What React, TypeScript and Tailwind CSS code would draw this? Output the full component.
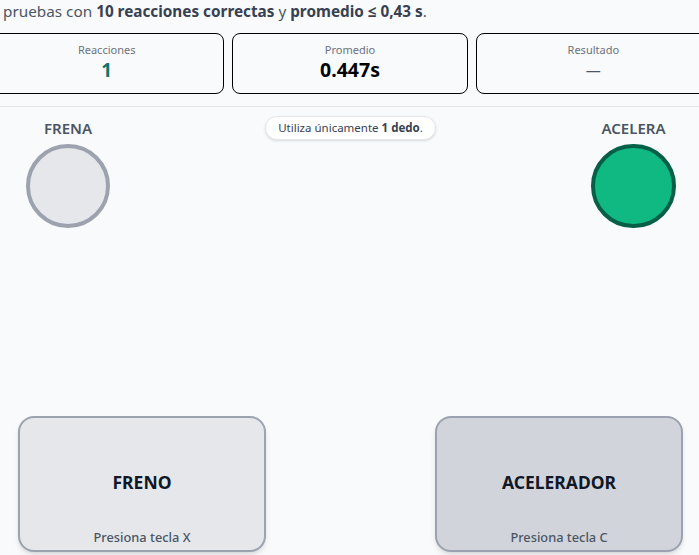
import React from "react";

export default function App() {
  return (
    <div
      className="w-[699px] h-[555px] overflow-hidden bg-[#f9fafb] text-[#374151]"
      style={{ fontFamily: '"Noto Sans", "Open Sans", sans-serif' }}
    >
      <p className="h-[33px] pl-[3px] pt-[0px] text-[15.3px] leading-[22px] text-[#4b5563] whitespace-nowrap">
        pruebas con <b className="font-bold text-[#374151]">10 reacciones correctas</b> y{" "}
        <b className="font-bold text-[#374151]">promedio ≤ 0,43 s</b>.
      </p>
      <div className="ml-[-11px] w-[722px]">
        <div className="grid grid-cols-3 gap-[8px]">
          {[
            { label: "Reacciones", value: "1", cls: "text-[#0f766e] font-bold text-[19px]" },
            { label: "Promedio", value: "0.447s", cls: "text-black font-bold text-[19.5px]" },
            { label: "Resultado", value: "—", cls: "text-[#4b5563] font-normal text-[15px]" },
          ].map((c) => (
            <div
              key={c.label}
              className="h-[61px] rounded-[8px] border border-black flex flex-col items-center pt-[9px]"
            >
              <span className="text-[11px] leading-[14px] text-[#6b7280]">{c.label}</span>
              <span className={`${c.cls} leading-[24px] mt-[1px]`}>{c.value}</span>
            </div>
          ))}
        </div>
      </div>
      <div className="mt-[12px] border-t border-[#e5e7eb] h-[448px] flex flex-col">
        <div className="flex items-start justify-between pl-[26px] pr-[23px] pt-[12px]">
          <div className="flex flex-col items-center w-[84px]">
            <span className="text-[15px] leading-[19px] font-semibold text-[#4b5563]">FRENA</span>
            <div className="mt-[6px] w-[84px] h-[84px] rounded-full border-[4px] border-[#9ca3af] bg-[#e5e7eb]" />
          </div>
          <div className="mt-[-3px] h-[24px] px-[12px] flex items-center rounded-full bg-white border border-[#e5e7eb] shadow-sm text-[11.5px] text-[#374151] whitespace-nowrap">
            Utiliza únicamente&nbsp;<b className="font-bold">1 dedo</b>.
          </div>
          <div className="flex flex-col items-center w-[85px]">
            <span className="text-[15px] leading-[19px] font-semibold text-[#4b5563]">ACELERA</span>
            <div className="mt-[6px] w-[85px] h-[84px] rounded-full border-[4px] border-[#065f46] bg-[#10b981]" />
          </div>
        </div>
        <div className="mt-auto flex justify-between pl-[18px] pr-[16px] pb-[2px]">
          <div className="w-[248px] h-[136px] rounded-[16px] border-2 border-[#9ca3af] bg-[#e5e7eb] shadow-md flex flex-col items-center">
            <span className="mt-[53px] text-[17.5px] leading-[22px] font-bold text-[#111827]">FRENO</span>
            <span className="mt-auto mb-[5px] text-[12.8px] leading-[16px] font-medium text-[#4b5563]">Presiona tecla X</span>
          </div>
          <div className="w-[248px] h-[136px] rounded-[16px] border-2 border-[#9ca3af] bg-[#d1d5db] shadow-md flex flex-col items-center">
            <span className="mt-[53px] text-[17.5px] leading-[22px] font-bold text-[#111827]">ACELERADOR</span>
            <span className="mt-auto mb-[5px] text-[12.8px] leading-[16px] font-medium text-[#4b5563]">Presiona tecla C</span>
          </div>
        </div>
      </div>
    </div>
  );
}
